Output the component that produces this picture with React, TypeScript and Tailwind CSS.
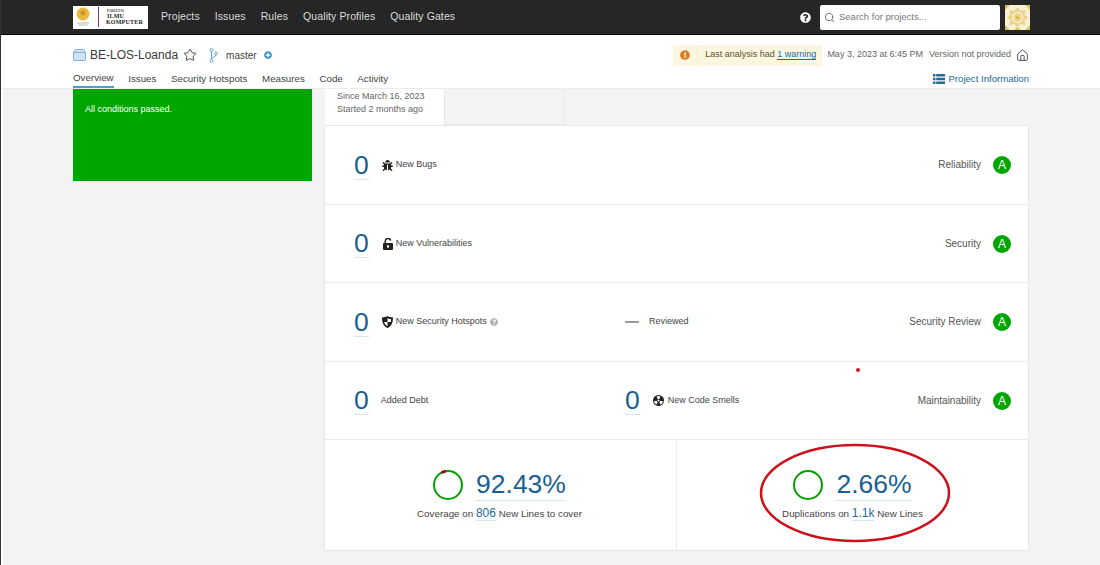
import { Star, House, Search } from 'lucide-react'
import { FaQuestionCircle, FaExclamationCircle, FaPlusCircle, FaBug } from 'react-icons/fa'

const NAV = ['Projects', 'Issues', 'Rules', 'Quality Profiles', 'Quality Gates']
const TABS = ['Overview', 'Issues', 'Security Hotspots', 'Measures', 'Code', 'Activity']

function LockIcon() {
  return (
    <svg width="10" height="12" viewBox="0 0 10 12" className="shrink-0">
      <path d="M2.2 5.5V3.2a2.8 2.8 0 0 1 5.5-.6" fill="none" stroke="#222" strokeWidth="1.5" />
      <path fillRule="evenodd" d="M1 5h8a1 1 0 0 1 1 1v5a1 1 0 0 1-1 1H1a1 1 0 0 1-1-1V6a1 1 0 0 1 1-1zm4 2a1.2 1.2 0 0 0-.6 2.2V10h1.2v-.8A1.2 1.2 0 0 0 5 7z" fill="#222" />
    </svg>
  )
}

function ShieldIcon() {
  return (
    <svg width="11" height="12" viewBox="0 0 11 12" className="shrink-0">
      <path fillRule="evenodd" d="M5.5 0C7 1 9 1.400 11 1.400c0 4.600-1 8.400-5.500 10.600C1 9.800 0 6 0 1.400 2 1.400 4 1 5.500 0zM5.500 2v4H2.200c.3 1.800 1.300 3 3.300 4.200V6h3.300c.2-1 .2-1.800.2-3C7.500 2.900 6.500 2.600 5.500 2z" fill="#222" />
    </svg>
  )
}

function SmellIcon() {
  return (
    <svg width="11" height="11" viewBox="0 0 11 11" className="shrink-0">
      <circle cx="5.500" cy="5.500" r="5.500" fill="#222" />
      <circle cx="5.500" cy="5.500" r="1" fill="#fff" />
      <path d="M3.600 1.500a4.400 4.400 0 0 1 3.800 0L6.300 4h-1.600zM1.100 6h2.700l.8 1.400-1.400 2.300A4.400 4.400 0 0 1 1.100 6zM9.900 6H7.200l-.8 1.400 1.400 2.300A4.400 4.400 0 0 0 9.900 6z" fill="#fff" />
    </svg>
  )
}

function ProjectIcon() {
  return (
    <svg width="13" height="12" viewBox="0 0 13 12" className="shrink-0">
      <path d="M2.500.5h8l2 3v6.500a1.500 1.500 0 0 1-1.500 1.500H2A1.500 1.500 0 0 1 .5 10V3.500z" fill="#cfe4f3" stroke="#7fb2d6" />
      <path d="M.5 3.500h12" stroke="#7fb2d6" />
    </svg>
  )
}

function BranchIcon() {
  return (
    <svg width="9" height="15" viewBox="0 0 9 15" className="shrink-0 ml-[12px]">
      <g fill="none" stroke="#6aa6cf" strokeWidth="1">
        <circle cx="2.500" cy="2" r="1.500" />
        <circle cx="2.500" cy="13" r="1.500" />
        <circle cx="7" cy="5.500" r="1.300" />
        <path d="M2.500 3.500v8M7 7c0 2-4.500 2-4.500 4" />
      </g>
    </svg>
  )
}

function ListIcon() {
  return (
    <svg width="12" height="10" viewBox="0 0 12 10" className="shrink-0">
      <path d="M0 0h2.500v2.400H0zM3.200 0H12v2.400H3.200zM0 3.800h2.500v2.400H0zM3.200 3.800H12v2.400H3.200zM0 7.600h2.500V10H0zM3.200 7.600H12V10H3.200z" fill="#236a97" />
    </svg>
  )
}

function Zero() {
  return (
    <span className="inline-block border-b border-[#d5e6f0] text-[26.500px] leading-[28px] text-[#1a5f92]">0</span>
  )
}

function Grade() {
  return (
    <span className="w-[18px] h-[18px] rounded-full bg-[#00a600] text-white text-[12px] leading-[18px] text-center shrink-0">A</span>
  )
}

function Rating({ label }: { label: string }) {
  return (
    <div className="ml-auto flex items-center gap-[12px] pr-[17px]">
      <span className="text-[10px] text-[#555] pb-[1px]">{label}</span>
      <Grade />
    </div>
  )
}

function Ring({ red }: { red?: boolean }) {
  return (
    <svg width="30" height="30" viewBox="0 0 30 30" className="shrink-0">
      <circle cx="15" cy="15" r="14" fill="none" stroke="#00a000" strokeWidth="2" />
      {red && <path d="M8.500 2.600A14 14 0 0 1 13 1.150" fill="none" stroke="#a4030f" strokeWidth="2.500" />}
    </svg>
  )
}

function BigValue({ value }: { value: string }) {
  return (
    <span className="border-b border-[#d5e6f0] text-[26.500px] leading-[31px] text-[#1a5f92]">{value}</span>
  )
}

function Logo() {
  return (
    <div className="w-[75px] h-[23px] bg-white flex items-center pl-[2px] gap-[7px]">
      <svg width="16" height="20" viewBox="0 0 16 20" className="shrink-0">
        <circle cx="8" cy="7" r="6.500" fill="#eab93c" />
        <circle cx="8" cy="6" r="2.500" fill="#c8962a" />
        <path d="M2 16h12M3.500 18h9" stroke="#b9b9a0" strokeWidth="1" />
      </svg>
      <div className="w-px h-[20px] bg-gradient-to-b from-[#2a3a8c] to-[#c2202c]" />
      <div className="font-['Liberation_Serif',serif] font-bold text-[6px] leading-[6px] text-[#222] tracking-[0.2px]">
        <div className="text-[3px] leading-[4px] pl-[1px]">FAKULTAS</div>
        <div className="pl-[1px]">ILMU</div>
        <div>KOMPUTER</div>
      </div>
    </div>
  )
}

function Avatar() {
  return (
    <svg width="25" height="25" viewBox="0 0 25 25" className="shrink-0 ml-[5px]">
      <rect width="25" height="25" fill="#f8f1d6" />
      <path d="M12.500 2l3 4 5-1-1 5 4 2.500-4 2.500 1 5-5-1-3 4-3-4-5 1 1-5-4-2.500 4-2.500-1-5 5 1z" fill="#ecd28a" />
      <circle cx="12.500" cy="12.500" r="5" fill="none" stroke="#f8f1d6" strokeWidth="1.500" />
      <circle cx="12.500" cy="12.500" r="1.800" fill="#e0b95a" />
      <path d="M0 0h5L0 5zM25 0h-5l5 5zM0 25h5l-5-5zM25 25h-5l5-5zM9 25l3.500-3 3.500 3z" fill="#e3bf5e" />
    </svg>
  )
}

export default function App() {
  return (
    <div className="relative h-[565px] overflow-hidden bg-[#f3f3f3] font-['Liberation_Sans',sans-serif]">
      {/* Top bar */}
      <div className="h-[35px] bg-[#262626] border-b border-black flex items-center pl-[73px] pr-[70px]">
        <Logo />
        <nav className="flex items-center gap-[15px] ml-[13px]">
          {NAV.map(n => (
            <span key={n} className="text-[10.500px] tracking-[0.1px] text-[#dcdcdc]">{n}</span>
          ))}
        </nav>
        <div className="ml-auto flex items-center">
          <FaQuestionCircle className="text-white mr-[9px]" size={11} />
          <div className="w-[180px] h-[25px] bg-white rounded-[2px] flex items-center pl-[4px] gap-[4px]">
            <Search size={11} className="text-[#666]" />
            <span className="text-[9.500px] text-[#777]">Search for projects...</span>
          </div>
          <Avatar />
        </div>
      </div>

      {/* Project header */}
      <div className="h-[54px] bg-white border-b border-[#ececec] pl-[73px] pr-[71px] flex flex-col">
        <div className="flex items-center h-[30px] pt-[10px]">
          <ProjectIcon />
          <span className="ml-[4px] text-[12px] text-[#3a3a3a]">BE-LOS-Loanda</span>
          <Star size={14} strokeWidth={1.5} className="ml-[5px] text-[#333]" />
          <BranchIcon />
          <span className="ml-[8px] text-[10px] text-[#444]">master</span>
          <FaPlusCircle size={8} className="ml-[7px] text-[#3d8ec4]" />
          <div className="ml-auto flex items-center">
            <div className="h-[21px] bg-[#fcf6e1] flex items-center text-[9px] text-[#5c5230]">
              <span className="w-[25px] h-full border-r border-[#f5ecd0] flex items-center justify-center">
                <FaExclamationCircle size={10} className="text-[#dd7a20]" />
              </span>
              <span className="pl-[7px] pr-[6px]">
                Last analysis had <span className="text-[#236a97] border-b border-[#236a97]">1 warning</span>
              </span>
            </div>
            <span className="ml-[5px] text-[9px] text-[#666]">May 3, 2023 at 6:45 PM</span>
            <span className="ml-[6px] text-[9px] text-[#666]">Version not provided</span>
            <House size={13} strokeWidth={1.5} className="ml-[5px] text-[#333]" />
          </div>
        </div>
        <div className="flex items-center flex-1">
          <div className="flex items-center gap-[14.600px] h-full">
            {TABS.map(t => (
              <span key={t} className={`h-full flex items-center pt-[5px] text-[9.750px] text-[#444] ${t === 'Overview' ? 'border-b-2 border-[#4b9fd5]' : ''}`}>{t}</span>
            ))}
          </div>
          <div className="ml-auto flex items-center gap-[3px] pt-[5px] text-[9.600px] text-[#236a97]">
            <ListIcon />
            Project Information
          </div>
        </div>
      </div>

      {/* Body */}
      <div className="flex pl-[73px] gap-[12px]">
        <div className="w-[239px] h-[92px] bg-[#00a600] pl-[12px] pt-[15px] text-[9px] leading-[11px] text-white">All conditions passed.</div>
        <div className="w-[705px]">
          <div className="flex h-[36px] pl-[1px]">
            <div className="w-[120px] bg-white border-r border-[#e8e8e8] pl-[12px] pt-[1px] text-[9px] leading-[13px] text-[#666]">
              <div>Since March 16, 2023</div>
              <div>Started 2 months ago</div>
            </div>
            <div className="w-[120px] border-r border-b border-[#e8e8e8]" />
          </div>
          <div className="bg-white border border-[#e8e8e8]">
            <div className="h-[79px] flex items-center border-b border-[#ececec] pl-[29px]">
              <Zero />
              <FaBug size={11} className="ml-[13px] text-[#222]" />
              <span className="ml-[3px] text-[9px] text-[#444]">New Bugs</span>
              <Rating label="Reliability" />
            </div>
            <div className="h-[78px] flex items-center border-b border-[#ececec] pl-[29px]">
              <Zero />
              <span className="ml-[14px]"><LockIcon /></span>
              <span className="ml-[3px] text-[9px] text-[#444]">New Vulnerabilities</span>
              <Rating label="Security" />
            </div>
            <div className="h-[79px] flex items-center border-b border-[#ececec] pl-[29px]">
              <div className="w-[271px] flex items-center">
                <Zero />
                <span className="ml-[13px]"><ShieldIcon /></span>
                <span className="ml-[3px] text-[9px] text-[#444]">New Security Hotspots</span>
                <FaQuestionCircle size={8} className="ml-[3px] text-[#aaa]" />
              </div>
              <span className="w-[14px] h-[2px] bg-[#999]" />
              <span className="ml-[10px] text-[9px] text-[#444]">Reviewed</span>
              <Rating label="Security Review" />
            </div>
            <div className="h-[78px] flex items-center border-b border-[#ececec] pl-[29px]">
              <div className="w-[271px] flex items-center">
                <Zero />
                <span className="ml-[12px] text-[9px] text-[#444]">Added Debt</span>
              </div>
              <Zero />
              <span className="ml-[13px]"><SmellIcon /></span>
              <span className="ml-[4px] text-[9px] text-[#444]">New Code Smells</span>
              <Rating label="Maintainability" />
            </div>
            <div className="h-[110px] flex">
              <div className="w-[352px] border-r border-[#ececec] flex flex-col items-center pt-[29px] pr-[2px]">
                <div className="flex items-center gap-[13px]">
                  <Ring red />
                  <BigValue value="92.43%" />
                </div>
                <div className="mt-[5px] text-[9.800px] text-[#444] leading-[15px]">
                  Coverage on <span className="text-[12px] text-[#236a97] border-b border-[#d5e6f0]">806</span> New Lines to cover
                </div>
              </div>
              <div className="flex-1 flex flex-col items-center pt-[29px]">
                <div className="flex items-center gap-[13px]">
                  <Ring />
                  <BigValue value="2.66%" />
                </div>
                <div className="mt-[5px] text-[9.800px] text-[#444] leading-[15px]">
                  Duplications on <span className="text-[12px] text-[#236a97] border-b border-[#d5e6f0]">1.1k</span> New Lines
                </div>
              </div>
            </div>
          </div>
        </div>
      </div>

      {/* Screenshot edge and red annotation lying over the page */}
      <span className="absolute left-0 top-0 w-[1px] h-full bg-[#333]" />
      <span className="absolute left-[1px] top-[89px] w-[2px] bottom-0 bg-white" />
      <svg width="200" height="110" viewBox="0 0 200 110" className="absolute left-[755px] top-[438px] pointer-events-none">
        <ellipse cx="100" cy="55" rx="94" ry="48" fill="none" stroke="#cc101c" strokeWidth="2.500" />
      </svg>
      <span className="absolute left-[856px] top-[368px] w-[4px] h-[4px] rounded-full bg-[#e01020]" />
    </div>
  )
}
